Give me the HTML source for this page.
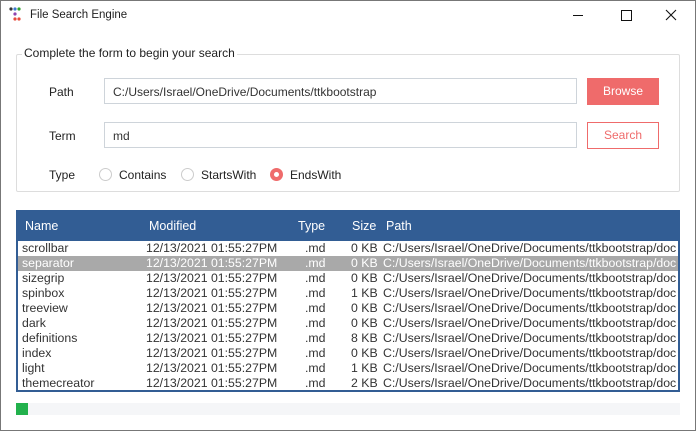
<html><head><style>
body{margin:0;width:696px;height:431px;overflow:hidden;background:#fff;font-family:"Liberation Sans",sans-serif;color:#222;position:relative}
.win{position:absolute;left:0;top:0;width:694px;height:429px;border:1px solid #777}
.a{position:absolute;white-space:nowrap}
.lf{position:absolute;left:16px;top:54px;width:662px;height:136px;border:1px solid #ddd;border-radius:2px}
.in{position:absolute;height:26px;border:1px solid #ced4da;background:#fff;font-size:12px;line-height:26px;padding-left:8px;box-sizing:border-box;color:#333}
.rad{position:absolute;width:13px;height:13px;border:1px solid #ccc;border-radius:50%;box-sizing:border-box}
.tv{position:absolute;left:16px;top:210px;width:664px;height:182px;border:2px solid #325d94;border-top:0;box-sizing:border-box}
.hd{position:absolute;left:16px;top:210px;width:664px;height:31px;background:#325d94;color:#fff;font-size:12.5px}
.row{position:absolute;left:18px;width:660px;height:15px;font-size:12.3px;line-height:15px;color:#333}
.row span{position:absolute;top:0}
.t{font-size:12px}
</style></head><body>
<div class="win"></div>
<svg class="a" style="left:9px;top:7px" width="14" height="16"><circle cx="2" cy="2" r="1.6" fill="#333"/><circle cx="6" cy="2" r="1.6" fill="#3b7ad1"/><circle cx="10" cy="2" r="1.6" fill="#2ca02c"/><circle cx="6" cy="7" r="1.6" fill="#8e44ad"/><circle cx="6" cy="12" r="1.6" fill="#e74c3c"/><circle cx="10" cy="12" r="1.6" fill="#e74c3c"/></svg>
<div class="a" style="left:30px;top:9px;font-size:11.5px">File Search Engine</div>
<div class="a" style="left:573px;top:15px;width:10px;height:1px;background:#111"></div>
<div class="a" style="left:621px;top:10px;width:9px;height:9px;border:1px solid #111"></div>
<svg class="a" style="left:665px;top:9px" width="12" height="12"><path d="M1 1L11 11M11 1L1 11" stroke="#111" stroke-width="1.1"/></svg>
<div class="lf"></div>
<div class="a t" style="left:22px;top:46px;background:#fff;padding:0 2px">Complete the form to begin your search</div>
<div class="a t" style="left:49px;top:85px">Path</div>
<div class="in" style="left:104px;top:78px;width:473px">C:/Users/Israel/OneDrive/Documents/ttkbootstrap</div>
<div class="a t" style="left:587px;top:78px;width:72px;height:27px;background:#ef6b6b;color:#fff;line-height:27px;text-align:center">Browse</div>
<div class="a t" style="left:49px;top:129px">Term</div>
<div class="in" style="left:104px;top:122px;width:473px">md</div>
<div class="a t" style="left:587px;top:122px;width:72px;height:27px;border:1px solid #ef6b6b;box-sizing:border-box;color:#ef6b6b;line-height:25px;text-align:center">Search</div>
<div class="a t" style="left:49px;top:168px">Type</div>
<div class="rad" style="left:99px;top:168px"></div><div class="a t" style="left:119px;top:168px">Contains</div>
<div class="rad" style="left:181px;top:168px"></div><div class="a t" style="left:201px;top:168px">StartsWith</div>
<div class="rad" style="left:270px;top:168px;border:4px solid #ef6b6b"></div><div class="a t" style="left:290px;top:168px">EndsWith</div>
<div class="tv"></div>
<div class="hd"><span class="a" style="left:9px;top:9px">Name</span><span class="a" style="left:133px;top:9px">Modified</span><span class="a" style="left:282px;top:9px">Type</span><span class="a" style="left:336px;top:9px">Size</span><span class="a" style="left:370px;top:9px">Path</span></div>
<div class="row" style="top:241px"><span style="left:4px">scrollbar</span><span style="left:128px">12/13/2021 01:55:27PM</span><span style="left:287px">.md</span><span style="left:333px">0 KB</span><span style="left:365px">C:/Users/Israel/OneDrive/Documents/ttkbootstrap/doc</span></div>
<div class="row" style="top:256px;background:#a9a9a9;color:#fff"><span style="left:4px">separator</span><span style="left:128px">12/13/2021 01:55:27PM</span><span style="left:287px">.md</span><span style="left:333px">0 KB</span><span style="left:365px">C:/Users/Israel/OneDrive/Documents/ttkbootstrap/doc</span></div>
<div class="row" style="top:271px"><span style="left:4px">sizegrip</span><span style="left:128px">12/13/2021 01:55:27PM</span><span style="left:287px">.md</span><span style="left:333px">0 KB</span><span style="left:365px">C:/Users/Israel/OneDrive/Documents/ttkbootstrap/doc</span></div>
<div class="row" style="top:286px"><span style="left:4px">spinbox</span><span style="left:128px">12/13/2021 01:55:27PM</span><span style="left:287px">.md</span><span style="left:333px">1 KB</span><span style="left:365px">C:/Users/Israel/OneDrive/Documents/ttkbootstrap/doc</span></div>
<div class="row" style="top:301px"><span style="left:4px">treeview</span><span style="left:128px">12/13/2021 01:55:27PM</span><span style="left:287px">.md</span><span style="left:333px">0 KB</span><span style="left:365px">C:/Users/Israel/OneDrive/Documents/ttkbootstrap/doc</span></div>
<div class="row" style="top:316px"><span style="left:4px">dark</span><span style="left:128px">12/13/2021 01:55:27PM</span><span style="left:287px">.md</span><span style="left:333px">0 KB</span><span style="left:365px">C:/Users/Israel/OneDrive/Documents/ttkbootstrap/doc</span></div>
<div class="row" style="top:331px"><span style="left:4px">definitions</span><span style="left:128px">12/13/2021 01:55:27PM</span><span style="left:287px">.md</span><span style="left:333px">8 KB</span><span style="left:365px">C:/Users/Israel/OneDrive/Documents/ttkbootstrap/doc</span></div>
<div class="row" style="top:346px"><span style="left:4px">index</span><span style="left:128px">12/13/2021 01:55:27PM</span><span style="left:287px">.md</span><span style="left:333px">0 KB</span><span style="left:365px">C:/Users/Israel/OneDrive/Documents/ttkbootstrap/doc</span></div>
<div class="row" style="top:361px"><span style="left:4px">light</span><span style="left:128px">12/13/2021 01:55:27PM</span><span style="left:287px">.md</span><span style="left:333px">1 KB</span><span style="left:365px">C:/Users/Israel/OneDrive/Documents/ttkbootstrap/doc</span></div>
<div class="row" style="top:376px"><span style="left:4px">themecreator</span><span style="left:128px">12/13/2021 01:55:27PM</span><span style="left:287px">.md</span><span style="left:333px">2 KB</span><span style="left:365px">C:/Users/Israel/OneDrive/Documents/ttkbootstrap/doc</span></div>
<div class="a" style="left:16px;top:403px;width:664px;height:12px;background:#f5f6f8"></div>
<div class="a" style="left:16px;top:403px;width:12px;height:12px;background:#22b14c"></div>
</body></html>
